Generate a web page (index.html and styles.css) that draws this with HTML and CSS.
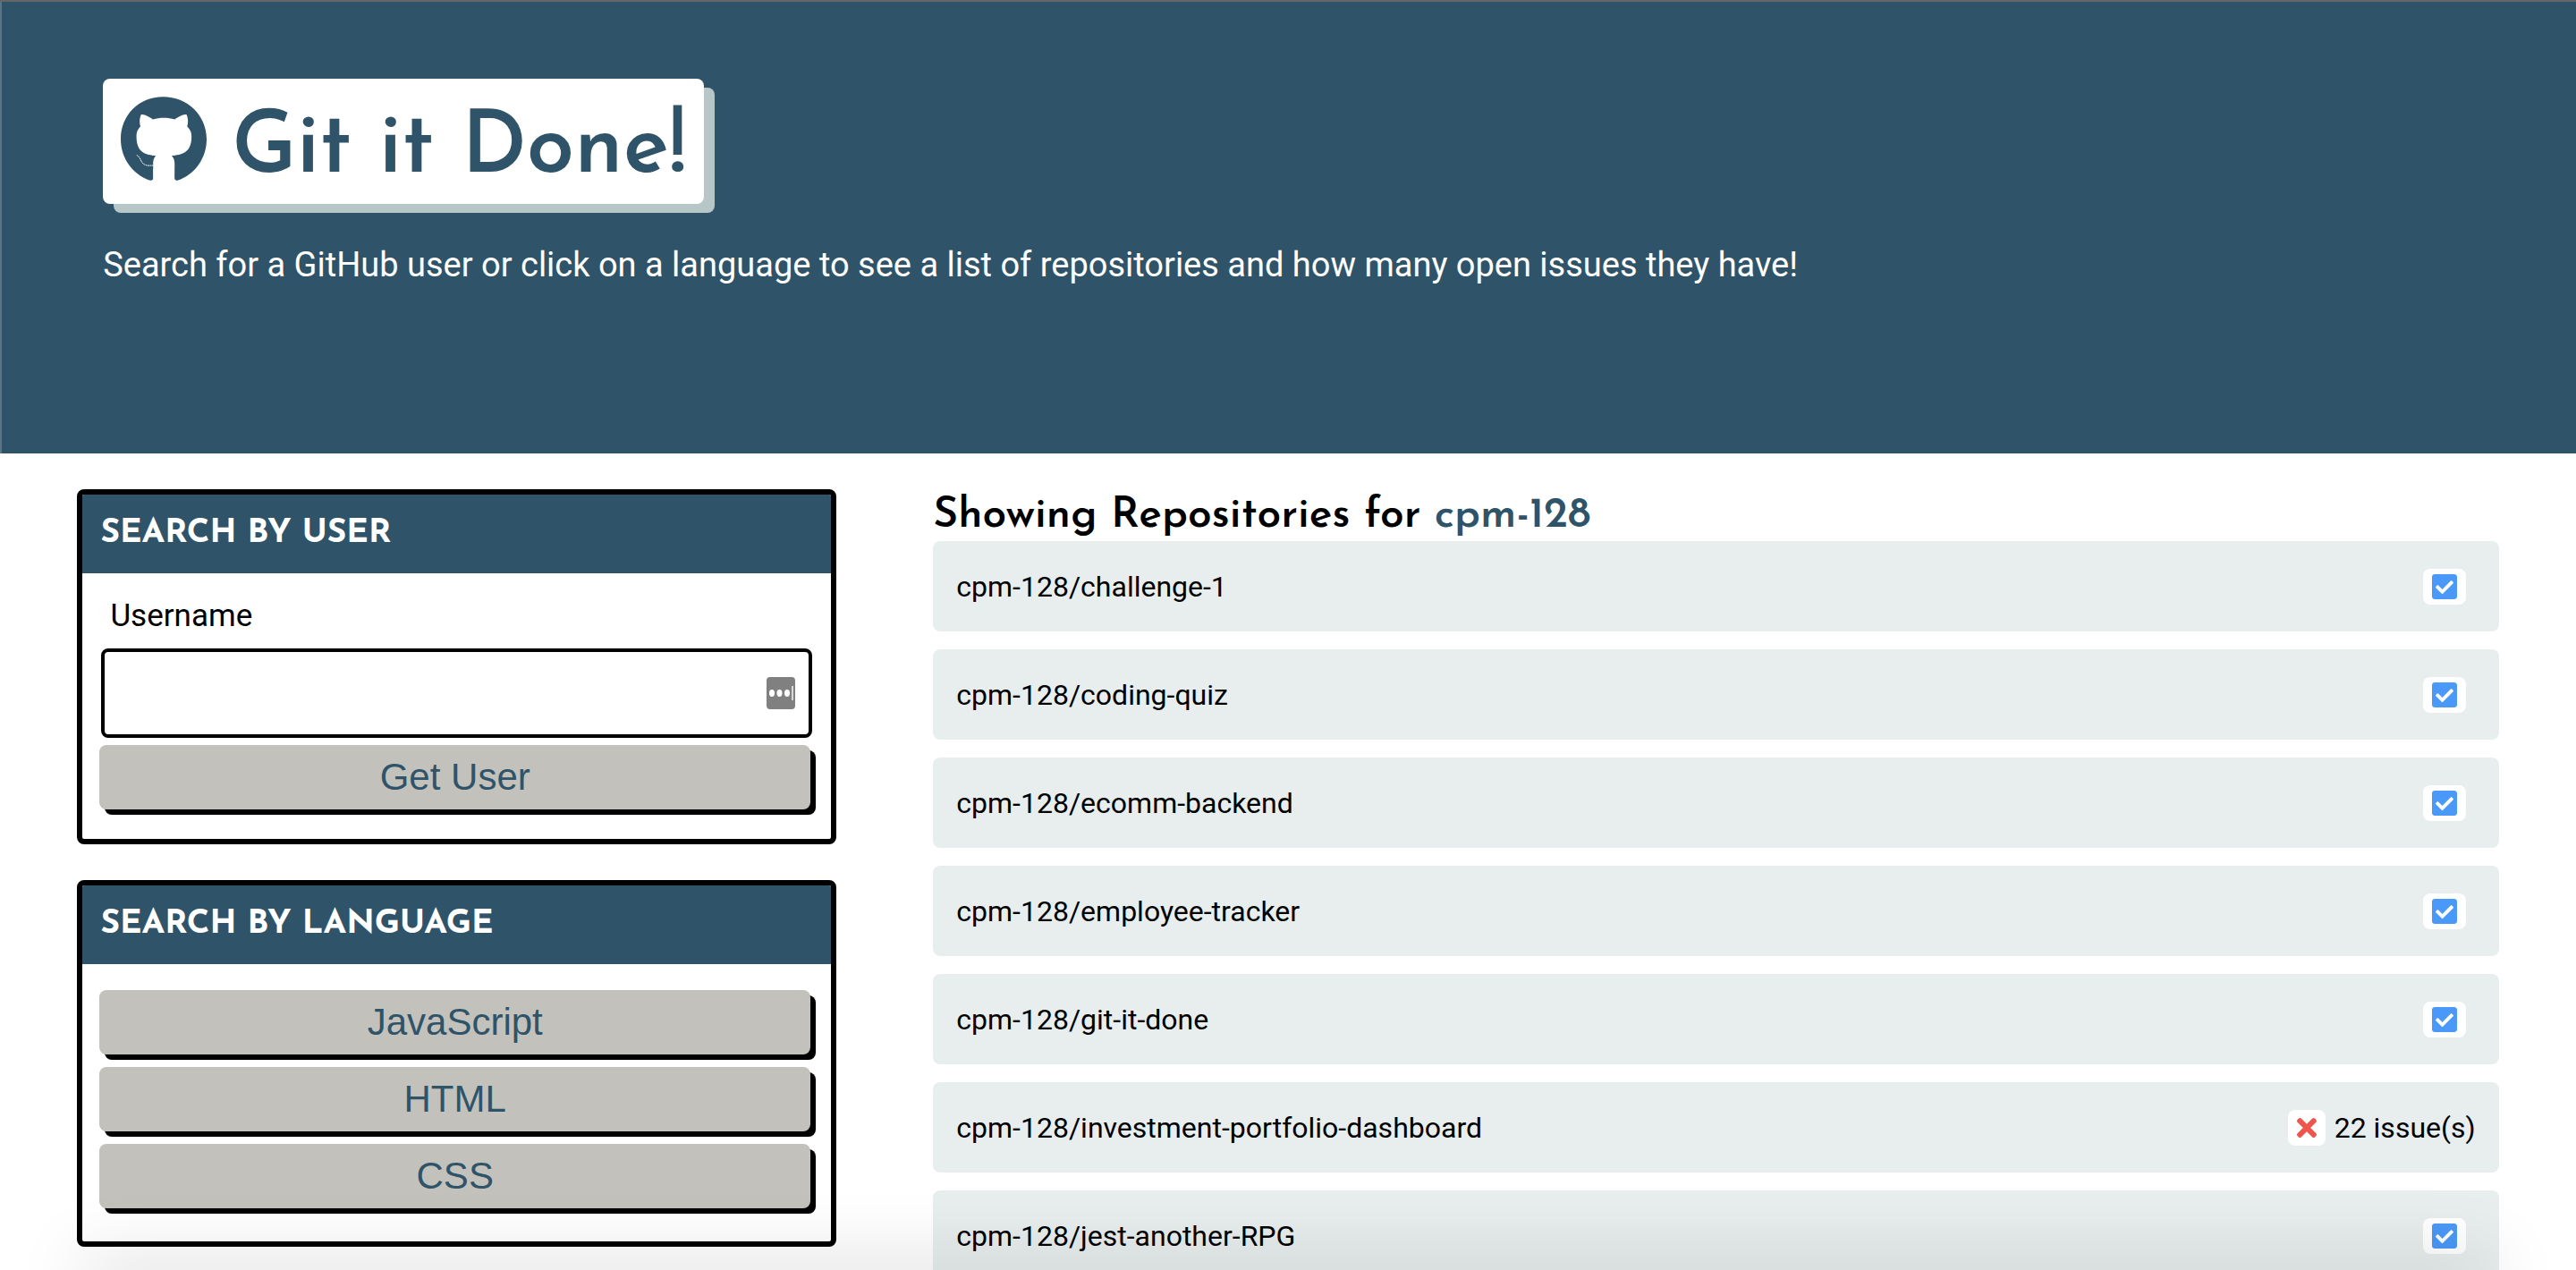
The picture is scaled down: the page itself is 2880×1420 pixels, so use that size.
FILE: index.html
```html
<!DOCTYPE html>
<html lang="en">
<head>
<meta charset="utf-8">
<meta name="viewport" content="width=device-width, initial-scale=1">
<title>Git it Done!</title>
<link rel="stylesheet" href="styles.css">
</head>
<body>
<svg class="sprite" aria-hidden="true">
  <symbol id="check" viewBox="0 32 448 448"><path d="M400 480H48c-26.510 0-48-21.490-48-48V80c0-26.510 21.490-48 48-48h352c26.510 0 48 21.490 48 48v352c0 26.510-21.490 48-48 48zm-204.686-98.059l184-184c6.248-6.248 6.248-16.379 0-22.627l-22.627-22.627c-6.248-6.248-16.379-6.249-22.628 0L184 302.745l-70.059-70.059c-6.248-6.248-16.379-6.248-22.628 0l-22.627 22.627c-6.248 6.248-6.248 16.379 0 22.627l104 104c6.249 6.250 16.379 6.250 22.628.001z"/></symbol>
  <symbol id="times" viewBox="0 80 352 352"><path d="M242.720 256l100.070-100.070c12.280-12.280 12.280-32.190 0-44.480l-22.240-22.240c-12.280-12.280-32.190-12.280-44.480 0L176 189.280 75.930 89.210c-12.280-12.280-32.190-12.280-44.480 0L9.210 111.450c-12.280 12.280-12.280 32.190 0 44.480L109.280 256 9.210 356.070c-12.280 12.280-12.280 32.190 0 44.480l22.240 22.240c12.280 12.280 32.200 12.280 44.480 0L176 322.720l100.070 100.070c12.280 12.280 32.200 12.280 44.480 0l22.240-22.240c12.280-12.280 12.280-32.190 0-44.480L242.720 256z"/></symbol>
</svg>
<div class="page">
  <header class="hero">
    <h1 class="brand">
      <svg class="brand-icon" viewBox="0 8 496 484" aria-hidden="true"><path d="M244.800 8C106.100 8 0 113.300 0 252c0 110.900 69.800 205.800 169.500 239.200 12.800 2.300 17.300-5.600 17.300-12.100 0-6.200-.3-40.400-.3-61.400 0 0-70 15-84.700-29.800 0 0-11.400-29.100-27.800-36.600 0 0-22.900-15.700 1.600-15.400 0 0 24.900 2 38.600 25.800 21.900 38.600 58.600 27.500 72.900 20.900 2.300-16 8.800-27.100 16-33.700-55.900-6.200-112.300-14.300-112.300-110.500 0-27.500 7.600-41.300 23.600-58.900-2.600-6.500-11.100-33.300 2.600-67.900 20.900-6.500 69 27 69 27 20-5.600 41.500-8.500 62.800-8.500s42.800 2.900 62.800 8.500c0 0 48.100-33.600 69-27 13.700 34.700 5.200 61.400 2.600 67.900 16 17.700 25.800 31.500 25.800 58.900 0 96.500-58.900 104.200-114.800 110.500 9.200 7.900 17 22.900 17 46.400 0 33.700-.3 75.400-.3 83.600 0 6.500 4.600 14.400 17.300 12.100C428.200 457.800 496 362.900 496 252 496 113.300 383.500 8 244.800 8z"/><path d="M52 330l62 6c20 34 48 46 73 40v48H90z"/><path class="brand-tail" d="M92 346c14 4 20 22 29 38 12 21 36 25 67 20"/></svg>
      <span>Git it Done!</span>
    </h1>
    <p class="tagline">Search for a GitHub user or click on a language to see a list of repositories and how many open issues they have!</p>
  </header>

  <main class="content">
    <div class="sidebar">
      <section class="card">
        <h2 class="card-title">Search by User</h2>
        <form class="card-body">
          <label class="field-label" for="username">Username</label>
          <div class="field">
            <input class="field-input" id="username" name="username" type="text" autocomplete="off">
            <svg class="field-icon" viewBox="0 0 32 36" aria-hidden="true"><rect width="32" height="36" rx="4" fill="#808080"/><g fill="#fff"><ellipse cx="6" cy="18" rx="3" ry="4"/><ellipse cx="14.500" cy="18" rx="3" ry="4"/><ellipse cx="23" cy="18" rx="3" ry="4"/><path d="M28 10h2v16h-2z" opacity=".7"/></g></svg>
          </div>
          <button class="btn" type="submit">Get User</button>
        </form>
      </section>

      <section class="card">
        <h2 class="card-title">Search by Language</h2>
        <div class="card-body language-buttons">
          <button class="btn" type="button">JavaScript</button>
          <button class="btn" type="button">HTML</button>
          <button class="btn" type="button">CSS</button>
        </div>
      </section>
    </div>

    <section class="results">
      <h2 class="results-title">Showing Repositories for <span class="results-user">cpm-128</span></h2>
      <div class="repo-list">
        <a class="repo" href="#"><span>cpm-128/challenge-1</span><span class="status"><svg class="badge ok" role="img" aria-label="No issues"><use href="#check"/></svg></span></a>
        <a class="repo" href="#"><span>cpm-128/coding-quiz</span><span class="status"><svg class="badge ok" role="img" aria-label="No issues"><use href="#check"/></svg></span></a>
        <a class="repo" href="#"><span>cpm-128/ecomm-backend</span><span class="status"><svg class="badge ok" role="img" aria-label="No issues"><use href="#check"/></svg></span></a>
        <a class="repo" href="#"><span>cpm-128/employee-tracker</span><span class="status"><svg class="badge ok" role="img" aria-label="No issues"><use href="#check"/></svg></span></a>
        <a class="repo" href="#"><span>cpm-128/git-it-done</span><span class="status"><svg class="badge ok" role="img" aria-label="No issues"><use href="#check"/></svg></span></a>
        <a class="repo" href="#"><span>cpm-128/investment-portfolio-dashboard</span><span class="status"><svg class="badge open" role="img" aria-label="Open issues"><use href="#times"/></svg><span>22 issue(s)</span></span></a>
        <a class="repo" href="#"><span>cpm-128/jest-another-RPG</span><span class="status"><svg class="badge ok" role="img" aria-label="No issues"><use href="#check"/></svg></span></a>
      </div>
    </section>
  </main>
</div>
<div class="edge-shade" aria-hidden="true"></div>
</body>
</html>
```

FILE: styles.css
```css
:root {
  --primary: #2f5469;
  --secondary: #b7c7c7;
  --light: #e8eeee;
  --neutral: #c3c1bb;
  --heading: "Josefin Sans", Lato, sans-serif;
}

*,
*::before,
*::after {
  box-sizing: border-box;
}

body {
  margin: 0;
  background: #fff;
  color: #000;
  font-family: Roboto, sans-serif;
  font-size: 32px;
  line-height: 40px;
}

h1,
h2,
p {
  margin: 0;
}

.sprite {
  display: none;
}

.page {
  height: 100vh;
  overflow-y: auto;
  scrollbar-width: none;
}

/* Header */
.hero {
  min-height: 507px;
  padding: 86px 4% 0;
  border-top: 2px solid #666;
  background: var(--primary);
  color: #fff;
  box-shadow: inset 2px 0 #5a7585;
}

.brand {
  display: inline-flex;
  align-items: flex-start;
  gap: 28px;
  height: 140px;
  padding: 20px 20px 0;
  border-radius: 8px;
  background: #fff;
  box-shadow: 12px 10px 0 var(--secondary);
  color: var(--primary);
  font-family: var(--heading);
  font-size: 96px;
  font-weight: 600;
  line-height: 120px;
}

.brand-icon {
  width: 96px;
  height: 94px;
  fill: currentColor;
}

.brand-tail {
  fill: none;
  stroke: #fff;
  stroke-width: 5px;
  stroke-dasharray: 10 3;
}

.tagline {
  margin-top: 44px;
  font-size: 38px;
  line-height: 48px;
}

/* Two-column body */
.content {
  display: grid;
  grid-template-columns: 849fr 1751fr;
  gap: 4%;
  padding: 40px 3%;
}

.sidebar {
  display: flex;
  flex-direction: column;
  gap: 40px;
}

.card {
  overflow: hidden;
  border: 6px solid #000;
  border-radius: 8px;
}

.card-title {
  padding: 20px;
  background: var(--primary);
  color: #fff;
  font-family: var(--heading);
  font-size: 37px;
  font-weight: 700;
  line-height: 48px;
  text-transform: uppercase;
}

.card-body {
  display: flex;
  flex-direction: column;
  padding: 24px 23px 33px 19px;
}

.field-label {
  padding: 0 12px;
  font-size: 35px;
  line-height: 48px;
}

.field {
  position: relative;
  margin: 12px -2px 8px 2px;
}

.field-input {
  display: block;
  width: 100%;
  height: 100px;
  padding: 0 64px 0 20px;
  border: 4px solid #000;
  border-radius: 8px;
  background: #fff;
  font: inherit;
}

.field-icon {
  position: absolute;
  top: 32px;
  right: 19px;
  width: 32px;
  height: 36px;
}

.btn {
  width: 100%;
  height: 72px;
  padding: 0;
  border: 0;
  border-radius: 8px;
  background: var(--neutral);
  box-shadow: 6px 6px 0 #000;
  color: var(--primary);
  font-family: "Liberation Sans", Arial, sans-serif;
  font-size: 42px;
  line-height: 48px;
}

.language-buttons {
  gap: 14px;
  padding-top: 29px;
  padding-bottom: 37px;
}

/* Repository list */
.results-title {
  padding-top: 2px;
  font-family: var(--heading);
  font-size: 48px;
  font-weight: 600;
  line-height: 56px;
}

.results-user {
  color: var(--primary);
}

.repo-list {
  display: flex;
  flex-direction: column;
  gap: 20px;
}

.repo {
  display: flex;
  align-items: center;
  justify-content: space-between;
  height: 101px;
  padding: 0 26px;
  border-radius: 8px;
  background: var(--light);
  color: inherit;
  text-decoration: none;
}

.status {
  display: flex;
  align-items: center;
  gap: 10px;
}

.badge {
  height: 40px;
  border-radius: 8px;
  background: #fff;
}

.ok {
  width: 48px;
  margin-right: 11px;
  padding: 6px 10px;
  fill: #4a98f7;
}

.open {
  width: 42px;
  padding: 9px 10px;
  fill: #ee564d;
}

/* Soft shade along the bottom edge of the window */
.edge-shade {
  position: fixed;
  right: 100px;
  bottom: -20px;
  left: 100px;
  height: 20px;
  box-shadow: 0 0 80px 8px rgba(0, 0, 0, 0.18);
  pointer-events: none;
}
```
